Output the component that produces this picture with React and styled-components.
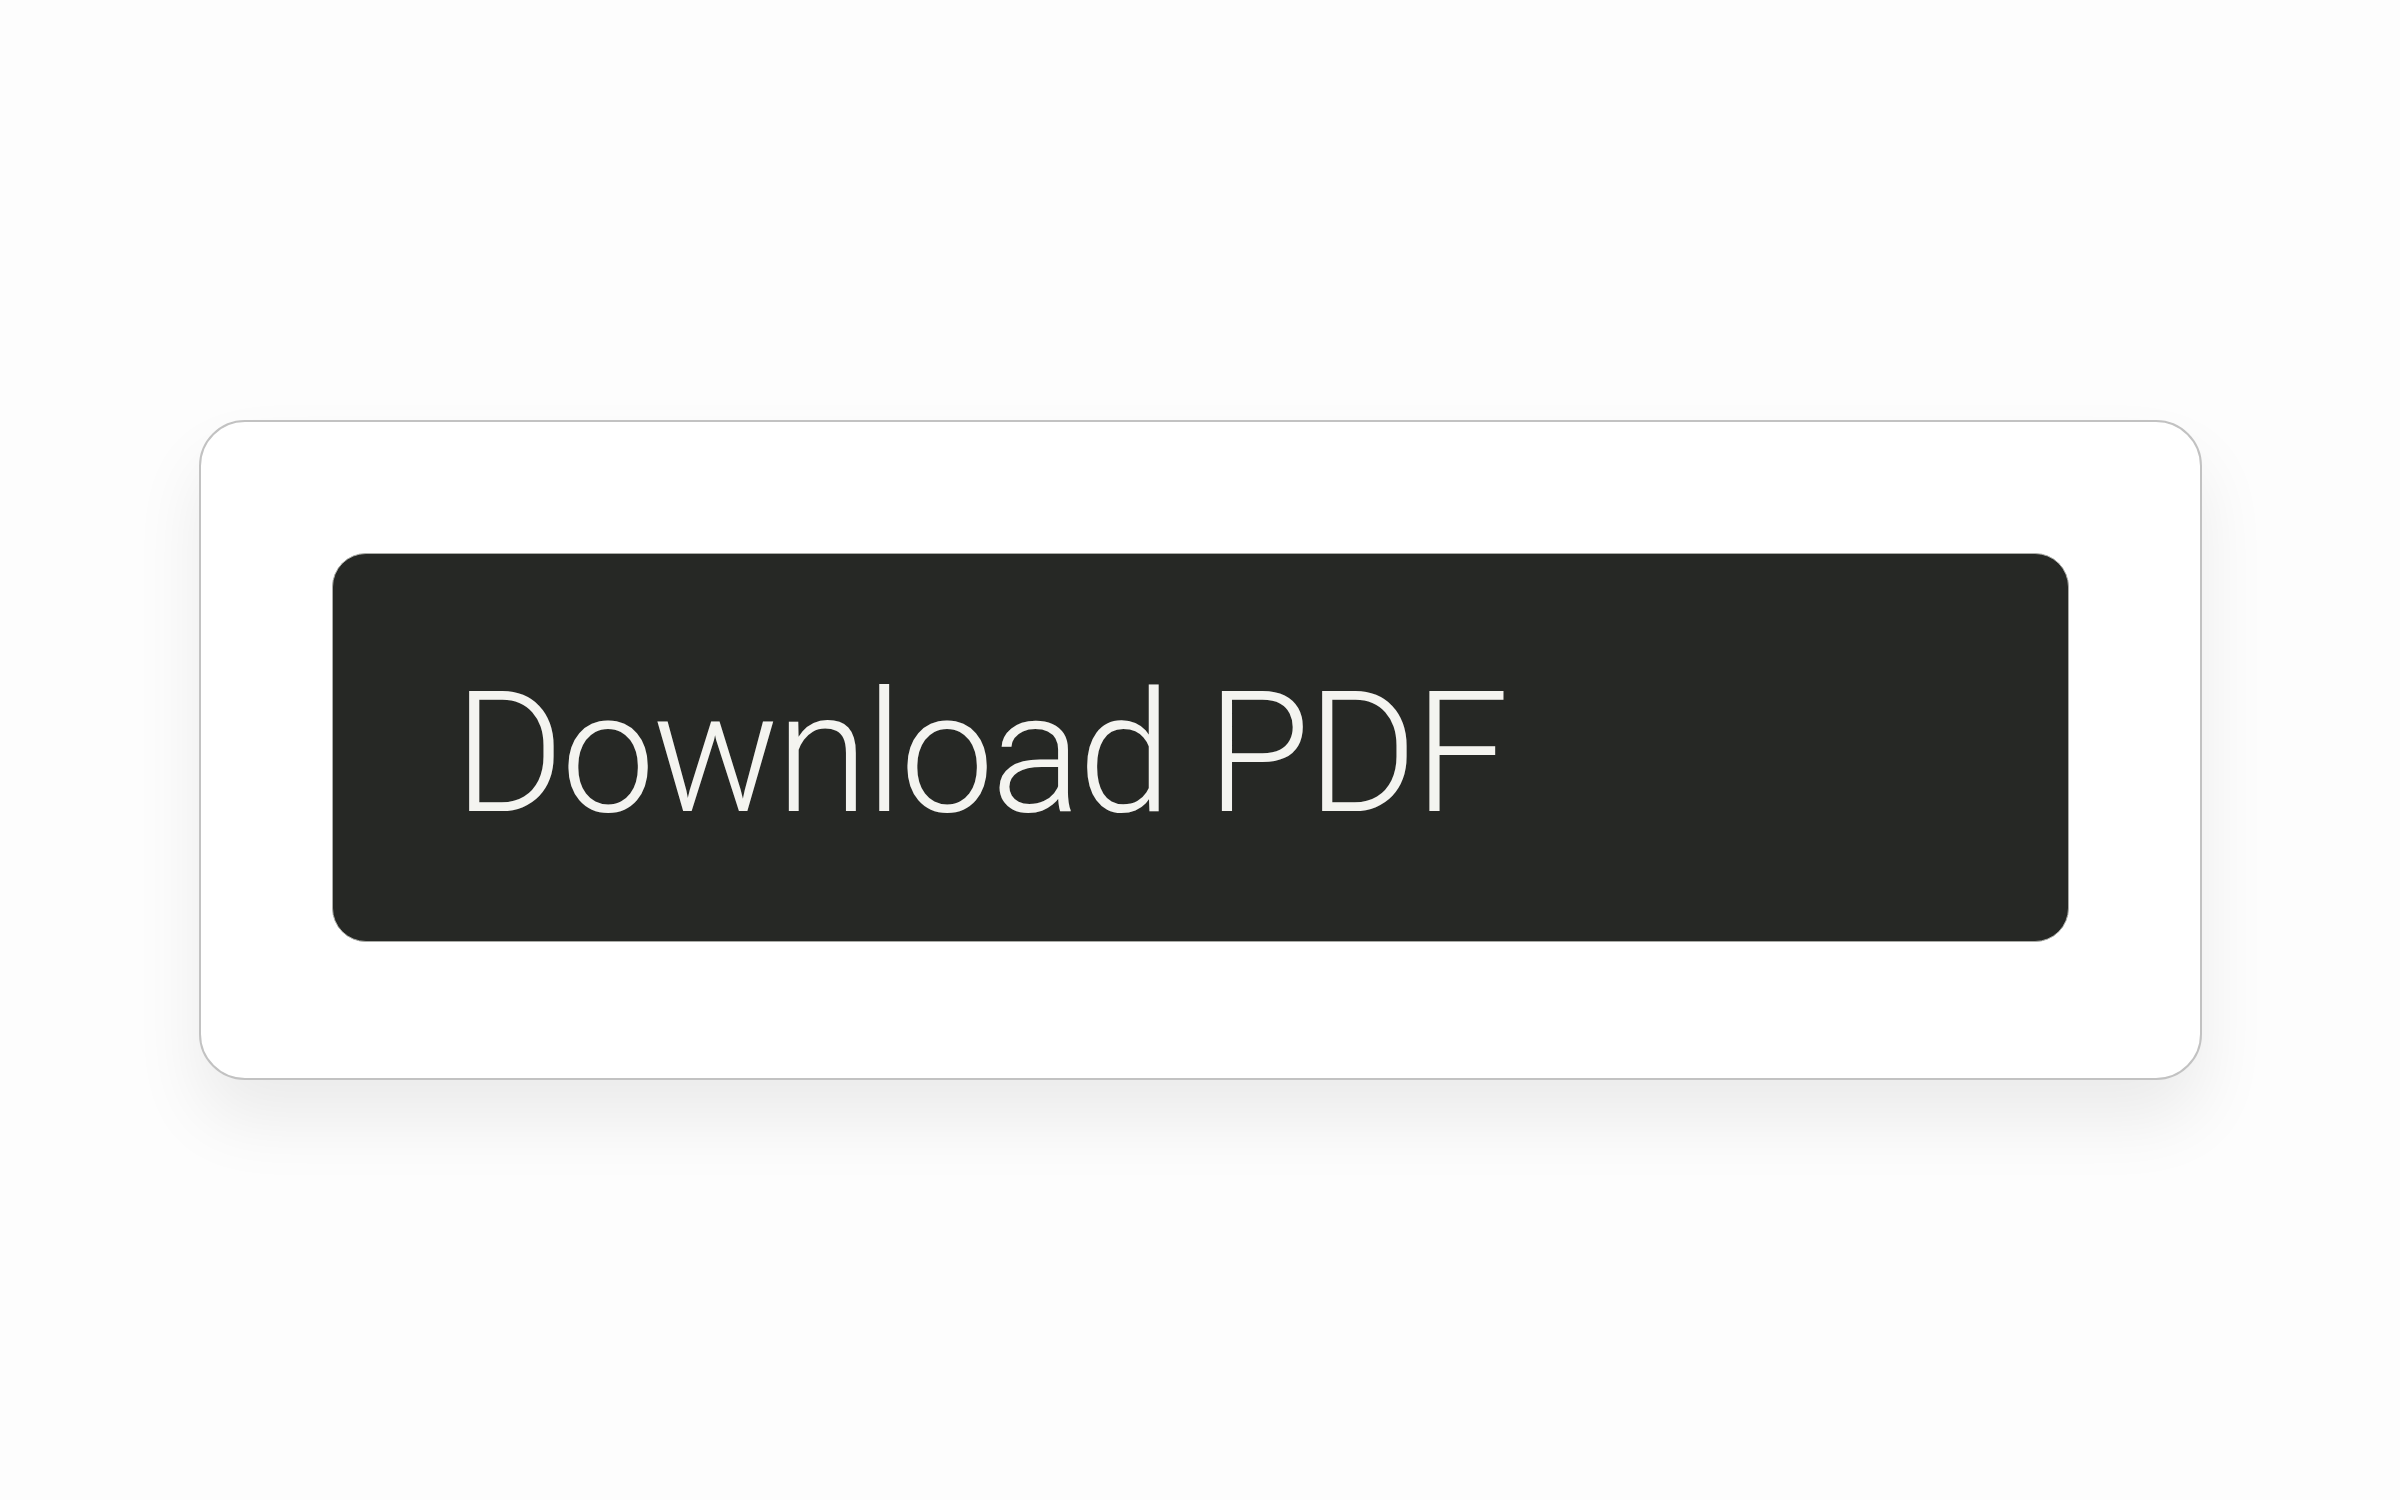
import React from "react";
import styled, { createGlobalStyle } from "styled-components";

const GlobalStyle = createGlobalStyle`
    html, body {
        margin: 0;
        padding: 0;
        background: #fdfdfd;
    }
    * {
        box-sizing: border-box;
    }
`

export const Page = styled.div`
    width: 2400px;
    height: 1500px;
    padding: 420px 0 0 199px;
`

export const Card = styled.div`
    width: 2003px;
    height: 660px;
    display: flex;
    align-items: flex-start;
    padding: 131px 0 0 131px;
    background-color: #ffffff;
    border: 2px solid #c2c2c2;
    border-radius: 46px;
    box-shadow: 0 40px 70px rgba(0, 0, 0, 0.075);
`

export const DownloadBtn = styled.button`
    width: 1737px;
    height: 389px;
    display: flex;
    align-items: center;
    padding: 12px 0 0 121px;
    background-color: #262825;
    border: 1px solid #a9aba6;
    border-radius: 34px;
    cursor: pointer;
    color: #f4f4f0;
    font-family: Roboto, "Liberation Sans", Arial, sans-serif;
    font-weight: 300;
    font-size: 168px;
    letter-spacing: -3px;
    line-height: 1;
    &:hover {
        opacity: 0.9;
    }
`

const App = () => {
    return (
        <>
            <GlobalStyle />
            <Page>
                <Card>
                    <DownloadBtn>Download PDF</DownloadBtn>
                </Card>
            </Page>
        </>
    )
}

export default App
